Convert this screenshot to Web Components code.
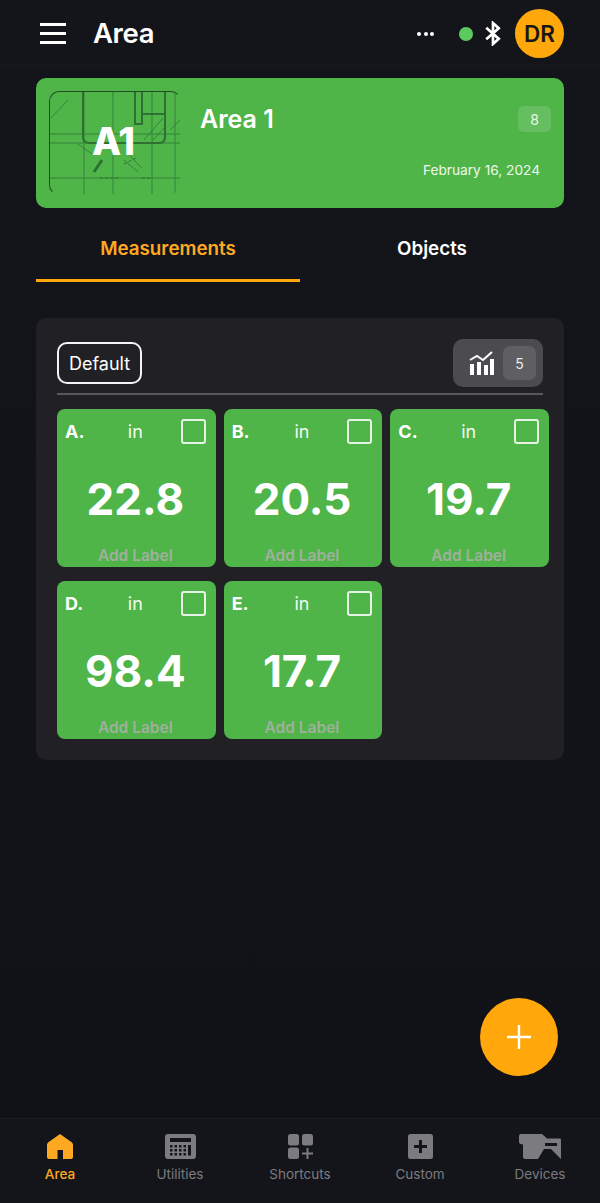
<!DOCTYPE html>
<html lang="en">
<head>
<meta charset="utf-8">
<title>Area</title>
<style>
    html, body { margin: 0; height: 100%; background: #12131a; }
    body { font-family: Inter, "Noto Sans", sans-serif; color: #fff; }
    area-app { height: 1203px; }
</style>
</head>
<body>
<area-app>
    <app-header title="Area"></app-header>
    <area-card name="Area 1" count="8" date="February 16, 2024" code="A1"></area-card>
    <tab-bar first="Measurements" second="Objects"></tab-bar>
    <measure-panel group="Default" count="5">
        <measure-tile letter="A." unit="in" value="22.8"></measure-tile>
        <measure-tile letter="B." unit="in" value="20.5"></measure-tile>
        <measure-tile letter="C." unit="in" value="19.7"></measure-tile>
        <measure-tile letter="D." unit="in" value="98.4"></measure-tile>
        <measure-tile letter="E." unit="in" value="17.7"></measure-tile>
    </measure-panel>
    <fab-button></fab-button>
    <bottom-nav>
        <nav-item label="Area" icon="home" active></nav-item>
        <nav-item label="Utilities" icon="calc"></nav-item>
        <nav-item label="Shortcuts" icon="shortcuts"></nav-item>
        <nav-item label="Custom" icon="custom"></nav-item>
        <nav-item label="Devices" icon="devices"></nav-item>
    </bottom-nav>
</area-app>

<script>
// Small helper, every element below sets its shadow root the same way
function render(el, css, html) {
    const template = document.createElement('template');
    template.innerHTML = `<style>${css}</style>${html}`;
    el.attachShadow({ mode: 'open' });
    el.shadowRoot.appendChild(template.content.cloneNode(true));
}

class AreaApp extends HTMLElement {
    constructor() {
        super();
        render(this, /*css*/`
            :host { display: flex; flex-direction: column; position: relative; width: 600px; overflow: hidden; background: linear-gradient(#14151b, #101217); }
        `, /*html*/`
            <slot></slot>
        `);
    }
}

class AppHeader extends HTMLElement {
    constructor() {
        super();
        render(this, /*css*/`
            :host { display: flex; align-items: center; box-sizing: border-box; height: 66px; padding: 2px 36px 0 40px; border-bottom: 1px solid #191a20; }
            .menu { display: flex; flex-direction: column; gap: 6px; width: 26px; margin-right: 27px; }
            .menu i { display: block; height: 3px; background: #fff; }
            h1 { flex: 1; margin: -2px 0 0; font-size: 27.5px; font-weight: 600; letter-spacing: -0.4px; }
            .dots { display: flex; gap: 2.5px; margin-right: 25px; }
            .dots i { width: 4px; height: 4px; border-radius: 50%; background: #fff; }
            .dot { width: 14px; height: 14px; border-radius: 50%; background: #5ccb5f; margin-right: 12px; }
            svg { display: block; margin-right: 14px; }
            .avatar { display: flex; align-items: center; justify-content: center; width: 49px; height: 49px; border-radius: 50%; background: #ffa70b; color: #1a1612; font-size: 22.5px; font-weight: 600; }
        `, /*html*/`
            <div class="menu"><i></i><i></i><i></i></div>
            <h1>${this.getAttribute('title')}</h1>
            <div class="dots"><i></i><i></i><i></i></div>
            <div class="dot"></div>
            <svg width="16" height="25" viewBox="0 0 15 24" fill="none" stroke="#fff" stroke-width="2.6">
                <path d="M1 6.500 13 17 7.500 22V2L13 7 1 17.500"/>
            </svg>
            <div class="avatar">DR</div>
        `);
    }
}

class AreaCard extends HTMLElement {
    constructor() {
        super();
        render(this, /*css*/`
            :host { display: flex; box-sizing: border-box; height: 130px; margin: 12px 36px 0; padding: 13px; background: #4fb549; border-radius: 10px; }
            .thumb { position: relative; box-sizing: border-box; width: 132px; height: 104px; border-radius: 10px; border: 1px solid #1f4f22; border-right-color: transparent; border-bottom-color: transparent; overflow: hidden; flex: none; }
            .thumb svg { display: block; filter: blur(.7px); }
            .thumb b { position: absolute; left: 0; right: 4px; top: 27px; text-align: center; font-size: 38px; font-weight: 800; letter-spacing: -1px; line-height: 44px; }
            .info { flex: 1; display: flex; flex-direction: column; padding-left: 19px; }
            .top { display: flex; justify-content: space-between; align-items: center; padding-top: 14px; }
            .name { font-size: 25px; font-weight: 600; line-height: 28px; }
            .count { display: flex; align-items: center; justify-content: center; width: 33px; height: 26px; border-radius: 6px; background: #65bf61; font-size: 14px; color: #e8f6e7; }
            .date { margin-top: auto; margin-bottom: 17px; padding-right: 11px; text-align: right; font-size: 13.7px; color: #eef8ed; }
        `, /*html*/`
            <div class="thumb">
                <svg width="132" height="104" viewBox="0 0 132 104" fill="none" stroke="#35833a" stroke-width="1">
                    <path d="M0 42H132M0 51H132M0 86H132M34 0V104M63 0V104M102 0V104M125 0V104"/>
                    <path stroke-width="2" stroke="#2d7031" d="M33 0V45Q33 51 40 51H109Q115 51 115 45V0M85 0V32H92V22H115M92 22V0"/>
                    <path d="M1 26 18 8M94 48 113 26M102 49 115 35M28 52 42 62M74 68 88 80M80 64 92 76M120 38 130 28" stroke="#35833a"/>
                    <path stroke-width="3" stroke="#2d7031" d="M44 80 52 68"/>
                    <path stroke-dasharray="3 2" d="M50 86H70M92 86H102M74 72 86 66" stroke="#2d7031"/>
                </svg>
                <b>${this.getAttribute('code')}</b>
            </div>
            <div class="info">
                <div class="top">
                    <span class="name">${this.getAttribute('name')}</span>
                    <span class="count">${this.getAttribute('count')}</span>
                </div>
                <div class="date">${this.getAttribute('date')}</div>
            </div>
        `);
    }
}

class TabBar extends HTMLElement {
    constructor() {
        super();
        render(this, /*css*/`
            :host { display: grid; grid-template-columns: 264px 264px; height: 74px; margin: 0 36px; font-size: 18.800px; font-weight: 600; }
            div { display: flex; align-items: center; justify-content: center; box-sizing: border-box; padding-top: 7px; }
            .on { color: #ffa922; border-bottom: 3px solid #ffa70b; padding-top: 9px; }
        `, /*html*/`
            <div class="on">${this.getAttribute('first')}</div>
            <div>${this.getAttribute('second')}</div>
        `);
    }
}

class MeasurePanel extends HTMLElement {
    constructor() {
        super();
        render(this, /*css*/`
            :host { display: block; box-sizing: border-box; height: 442px; margin: 36px 36px 0; padding: 21px 21px 0; background: #212025; border-radius: 10px; }
            .head { display: flex; justify-content: space-between; align-items: center; height: 48px; }
            .group { box-sizing: border-box; display: flex; align-items: center; height: 42px; padding: 0 10px; border: 2px solid #f4f4f4; border-radius: 10px; font-size: 18px; }
            .stats { display: flex; align-items: center; box-sizing: border-box; width: 90px; height: 48px; padding: 0 7px 0 16px; gap: 9px; border-radius: 10px; background: #4c4b50; }
            .stats svg { display: block; flex: none; }
            .stats span { display: flex; align-items: center; justify-content: center; width: 33px; height: 34px; border-radius: 7px; background: #5f5e63; font-size: 14px; color: #e9e9ea; }
            hr { height: 2px; margin: 6px 0 14px; border: 0; background: #59585c; }
            .grid { display: grid; grid-template-columns: repeat(3, 1fr); gap: 14px 8px; width: 492px; }
        `, /*html*/`
            <div class="head">
                <div class="group">${this.getAttribute('group')}</div>
                <div class="stats">
                    <svg width="25" height="24" viewBox="0 0 25 24" fill="#fff">
                        <path d="M1 13h4v11H1zM8 11h4v13H8zM15 14h4v10h-4zM21 8h4v16h-4z"/>
                        <path d="M1 9 8 5l6 4 9-8" fill="none" stroke="#fff" stroke-width="2"/>
                    </svg>
                    <span>${this.getAttribute('count')}</span>
                </div>
            </div>
            <hr>
            <div class="grid"><slot></slot></div>
        `);
    }
}

class MeasureTile extends HTMLElement {
    constructor() {
        super();
        render(this, /*css*/`
            :host { display: flex; flex-direction: column; box-sizing: border-box; height: 158px; padding: 10px 10px 2px 8px; background: #4fb549; border-radius: 8px; }
            .top { display: grid; grid-template-columns: 1fr auto 1fr; align-items: center; height: 25px; }
            .letter { font-size: 18px; font-weight: 700; }
            .unit { font-size: 18px; color: #f2faf1; }
            .box { justify-self: end; box-sizing: border-box; width: 25px; height: 25px; border: 2px solid #e6f4e5; border-radius: 3px; }
            .value { flex: 1; display: flex; align-items: center; justify-content: center; font-size: 44px; font-weight: 700; padding-top: 7px; }
            .label { text-align: center; font-size: 15.500px; font-weight: 600; color: #a0b09d; }
        `, /*html*/`
            <div class="top">
                <span class="letter">${this.getAttribute('letter')}</span>
                <span class="unit">${this.getAttribute('unit')}</span>
                <span class="box"></span>
            </div>
            <div class="value">${this.getAttribute('value')}</div>
            <div class="label">Add Label</div>
        `);
    }
}

class FabButton extends HTMLElement {
    constructor() {
        super();
        render(this, /*css*/`
            :host { position: absolute; left: 480px; top: 998px; display: flex; align-items: center; justify-content: center; width: 78px; height: 78px; border-radius: 50%; background: #ffa70b; }
            svg { display: block; }
        `, /*html*/`
            <svg width="24" height="24" viewBox="0 0 24 24" stroke="#fff" stroke-width="2.4"><path d="M12 0V24M0 12H24"/></svg>
        `);
    }
}

class BottomNav extends HTMLElement {
    constructor() {
        super();
        render(this, /*css*/`
            :host { display: grid; grid-template-columns: repeat(5, 1fr); box-sizing: border-box; height: 85px; margin-top: auto; border-top: 1px solid #1c1d23; background: #14151a; }
        `, /*html*/`<slot></slot>`);
    }
}

// [width, markup], all icons are 25 high
const NAV_ICONS = {
    home: [26, '<path fill-rule="evenodd" d="M13 0 25 8.500Q26 9.500 26 11V23Q26 25 24 25H16V16H10.500V25H2Q0 25 0 23V11Q0 9.500 1 8.500Z"/>'],
    calc: [31, '<path fill-rule="evenodd" d="M3 0H28Q31 0 31 3V22Q31 25 28 25H3Q0 25 0 22V3Q0 0 3 0ZM5 4V8H26V4ZM5 11V13.500H7.500V11ZM9.500 11V13.500H12V11ZM14 11V13.500H16.500V11ZM18.500 11V13.500H21V11ZM5 15V17.500H7.500V15ZM9.500 15V17.500H12V15ZM14 15V17.500H16.500V15ZM18.500 15V17.500H21V15ZM5 19V21.500H7.500V19ZM9.500 19V21.500H12V19ZM14 19V21.500H16.500V19ZM18.500 19V21.500H21V19ZM23 11V21.500H26V11Z"/>'],
    shortcuts: [25, '<rect width="11" height="11.500" rx="2.500"/><rect x="14" width="11" height="11.500" rx="2.500"/><rect y="13.500" width="11" height="11.500" rx="2.500"/><path d="M18.500 14H20.500V18.500H25V20.500H20.500V25H18.500V20.500H14V18.500H18.500Z"/>'],
    custom: [25, '<path fill-rule="evenodd" d="M2.500 0H22.500Q25 0 25 2.500V22.500Q25 25 22.500 25H2.500Q0 25 0 22.500V2.500Q0 0 2.500 0ZM11 6V11H6V14H11V19H14V14H19V11H14V6Z"/>'],
    devices: [42, '<path fill-rule="evenodd" d="M2 0H23L28 4.500H41Q42 4.500 42 6V25L32 15H25L19 25H6Q4 25 4 23V10.500L1.500 10Q0 9.500 0 8V2Q0 0 2 0ZM26 9V12H38V9Z"/>']
};

class NavItem extends HTMLElement {
    constructor() {
        super();
        const [width, markup] = NAV_ICONS[this.getAttribute('icon')];
        render(this, /*css*/`
            :host { display: flex; flex-direction: column; align-items: center; padding-top: 15px; font-size: 13.500px; color: #7b7b80; }
            :host([active]) { color: #ffa922; font-weight: 500; }
            svg { display: block; fill: currentColor; margin-bottom: 7px; }
        `, /*html*/`
            <svg width="${width}" height="25" viewBox="0 0 ${width} 25">${markup}</svg>
            <span>${this.getAttribute('label')}</span>
        `);
    }
}

customElements.define('area-app', AreaApp);
customElements.define('app-header', AppHeader);
customElements.define('area-card', AreaCard);
customElements.define('tab-bar', TabBar);
customElements.define('measure-panel', MeasurePanel);
customElements.define('measure-tile', MeasureTile);
customElements.define('fab-button', FabButton);
customElements.define('bottom-nav', BottomNav);
customElements.define('nav-item', NavItem);
</script>
</body>
</html>
